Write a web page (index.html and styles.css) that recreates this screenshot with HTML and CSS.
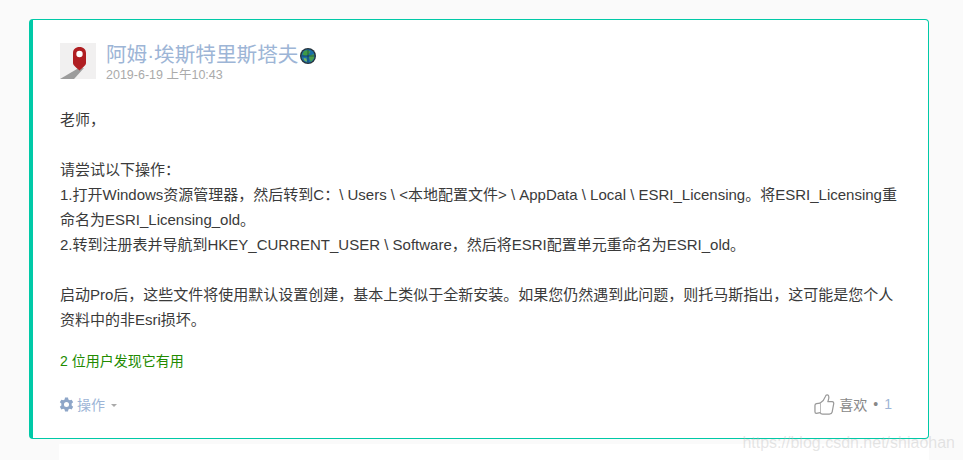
FILE: index.html
```html
<!DOCTYPE html>
<html lang="zh">
<head>
<meta charset="utf-8">
<title>回复</title>
<link rel="stylesheet" href="styles.css">
</head>
<body>
<main class="page">
  <article class="card">
    <header class="head">
      <svg class="avatar" viewBox="0 0 36 36" width="36" height="36" aria-hidden="true">
        <rect width="36" height="36" fill="#f1f0f0"/>
        <path d="M0 36 L17 26 L24 25 L14 36 Z" fill="#9c9c9c"/>
        <path d="M19.500 4 C15.500 4 13 6.500 13 10 L13 20 C13 22.500 17 25 19.500 27.500 C22 25 26 22.500 26 20 L26 10 C26 6.500 23.500 4 19.500 4 Z" fill="#b01e22"/>
        <circle cx="19.500" cy="11" r="3.200" fill="#fff"/>
      </svg>
      <div class="meta">
        <div class="name-row">
          <span class="name">阿姆·埃斯特里斯塔夫</span>
          <svg class="globe" viewBox="0 0 16 16" width="16" height="16" aria-hidden="true">
            <circle cx="8" cy="8" r="8" fill="#26323a"/>
            <circle cx="8" cy="8" r="6.700" fill="#1a6ea8"/>
            <path d="M4 3 L8 2 L10.500 4 L8 7 L5.500 8 L2.500 6.500 Z" fill="#3f9a46"/>
            <path d="M9 8 L13.800 6 L14.200 10 L11 14 L9.500 11 Z" fill="#4aa04a"/>
            <path d="M3.500 10 L6.500 10.500 L7 13.800 L4.500 12.800 Z" fill="#79b85c"/>
            <path d="M8 1.500 V14.500 M1.500 8 H14.500" stroke="#16303f" stroke-width=".6" fill="none"/>
          </svg>
        </div>
        <time class="date">2019-6-19 上午10:43</time>
      </div>
    </header>
    <div class="body">
      <p>老师，</p>
      <p>请尝试以下操作：<br>
      1.打开Windows资源管理器，然后转到C：\ Users \ &lt;本地配置文件&gt; \ AppData \ Local \ ESRI_Licensing。将ESRI_Licensing重命名为ESRI_Licensing_old。<br>
      2.转到注册表并导航到HKEY_CURRENT_USER \ Software，然后将ESRI配置单元重命名为ESRI_old。</p>
      <p>启动Pro后，这些文件将使用默认设置创建，基本上类似于全新安装。如果您仍然遇到此问题，则托马斯指出，这可能是您个人资料中的非Esri损坏。</p>
    </div>
    <div class="helpful">2 位用户发现它有用</div>
    <footer class="actions">
      <div class="ops">
        <svg class="gear" viewBox="0 0 16 16" width="15" height="15" aria-hidden="true">
          <path fill-rule="evenodd" d="M6.400 .6 H9.600 L10 2.700 L11.500 3.500 L13.500 2.800 L15.100 5.600 L13.500 7 V9 L15.100 10.400 L13.500 13.200 L11.500 12.500 L10 13.300 L9.600 15.400 H6.400 L6 13.300 L4.500 12.500 L2.500 13.200 L.9 10.400 L2.500 9 V7 L.9 5.600 L2.500 2.800 L4.500 3.500 L6 2.700 Z M8 5.300 A2.700 2.700 0 1 0 8 10.700 A2.700 2.700 0 1 0 8 5.300 Z" fill="#8ea6c8"/>
        </svg>
        <span class="ops-label">操作</span>
        <span class="caret"></span>
      </div>
      <div class="likes">
        <svg class="thumb" viewBox="0 0 22 24" width="21" height="23" aria-hidden="true">
          <path d="M6.500 10.500 C9 9 11 6.500 12 3.500 C12.500 1.500 15 1 15.500 3.500 C16 5.500 15 7.500 14.500 9 L19 9 C20.500 9 21 10.500 20.500 12 L19 20 C18.700 21.500 17.500 22 16 22 L9 22 C7.500 22 6.800 21.400 6.500 20.500 Z" fill="#fff" stroke="#999" stroke-width="1.300" stroke-linejoin="round"/>
          <path d="M6.500 10.500 L2.500 11 C1.500 11.200 1 12 1 13 L1 19.500 C1 20.500 1.600 21.300 2.500 21.300 L6.500 20.500" fill="#fff" stroke="#999" stroke-width="1.300" stroke-linejoin="round"/>
        </svg>
        <span class="like-label">喜欢</span>
        <span class="dot">•</span>
        <span class="like-count">1</span>
      </div>
    </footer>
  </article>
  <div class="next"></div>
</main>
<div class="watermark">https://blog.csdn.net/shiaohan</div>
</body>
</html>
```
FILE: styles.css
```css
* { box-sizing: border-box; }
html, body { margin: 0; height: 100%; }
body {
  background: #fafafa;
  font-family: "Liberation Sans", "Noto Sans CJK SC", sans-serif;
  font-size: 15px;
  color: #3a3a3a;
  overflow: hidden;
  position: relative;
}
.page {
  width: 900px;
  margin-left: 29px;
  padding-top: 19px;
  display: flex;
  flex-direction: column;
  height: 460px;
}
.card {
  height: 420px;
  flex: none;
  background: #fff;
  border: 1px solid #00c9a7;
  border-left-width: 4px;
  border-radius: 4px;
  padding: 23px 28px 0 27px;
  display: flex;
  flex-direction: column;
}
.head { display: flex; gap: 10px; height: 36px; }
.avatar { flex: none; }
.meta { display: flex; flex-direction: column; }
.name-row { display: flex; align-items: center; gap: 2px; height: 24px; }
.name { font-size: 20.625px; line-height: 24px; color: #9db5d6; }
.globe { margin-top: 1px; }
.date { margin-top: 1px; font-size: 12.500px; line-height: 15px; color: #aaa; }
.body { margin-top: 28px; line-height: 25px; }
.body p { margin: 0 0 25px; }
.body p:last-child { margin-bottom: 0; }
.helpful { margin-top: 19px; font-size: 14px; line-height: 20px; color: #228b00; }
.actions {
  margin-top: 20px;
  display: flex;
  justify-content: space-between;
  align-items: center;
  height: 26px;
  margin-right: 8px;
}
.ops { display: flex; align-items: center; color: #9db5d6; font-size: 14px; }
.gear { margin-right: 3px; margin-left: -1px; }
.caret {
  margin-left: 6px;
  margin-top: 2px;
  border: 3.500px solid transparent;
  border-top: 3.500px solid #aaa;
  border-bottom: 0;
}
.likes { display: flex; align-items: center; font-size: 14px; color: #888; }
.thumb { margin-right: 4px; }
.dot { margin: 0 6px; }
.like-count { color: #9db5d6; }
.next { flex: 1; margin: 5px 0 0 30px; background: #fff; }
.watermark {
  position: absolute;
  right: 8px;
  top: 433px;
  font-size: 16px;
  line-height: 20px;
  color: rgba(180, 180, 180, .35);
  white-space: nowrap;
}
```
